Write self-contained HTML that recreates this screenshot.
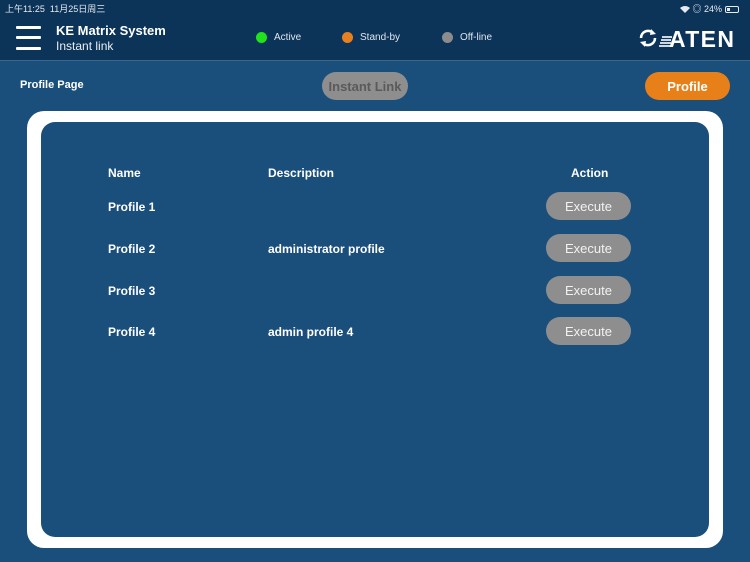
<!DOCTYPE html>
<html><head><meta charset="utf-8">
<style>
*{margin:0;padding:0;box-sizing:border-box}
body{width:750px;height:562px;overflow:hidden;background:#1b4f7b;font-family:"Liberation Sans","Noto Sans CJK SC",sans-serif;position:relative;color:#fff}
.hdr{position:absolute;left:0;top:0;width:750px;height:61px;background:#0c3358;border-bottom:1px solid #3a6690}
.abs{position:absolute;white-space:nowrap}
.bar{position:absolute;left:16px;width:25px;height:3px;background:#fff;border-radius:1px}
.dot{position:absolute;width:11px;height:11px;border-radius:50%}
.lg{font-size:10px;color:#dfe6ee}
.btn{position:absolute;border-radius:15px;text-align:center;font-weight:bold;font-size:13px}
.frame{position:absolute;left:27px;top:111px;width:696px;height:437px;background:#fff;border-radius:17px}
.inner{position:absolute;left:41px;top:122px;width:668px;height:415px;background:#1b4f7b;border-radius:14px}
.t{position:absolute;font-weight:bold;font-size:12px;color:#fff}
.ex{position:absolute;left:546px;width:85px;height:28px;border-radius:14px;background:#8e8e8e;color:#f2f2f2;font-size:13px;text-align:center;line-height:30px}
</style></head><body>
<div class="hdr"></div>
<div class="abs" style="left:5px;top:2px;font-size:9px;color:#e6ebf1">上午11:25&nbsp;&nbsp;11月25日周三</div>
<div class="abs" style="left:680px;top:2px;font-size:9px;color:#e6ebf1">
<svg width="10" height="8" viewBox="0 0 10 8" style="vertical-align:-1px"><path d="M0 3 Q5 -1 10 3 L5 8Z" fill="#e6ebf1"/></svg> ◎ 24% <span style="display:inline-block;width:14px;height:7px;border:1px solid #e6ebf1;border-radius:2px;vertical-align:-1px;position:relative"><span style="position:absolute;left:1px;top:1px;width:3px;height:3px;background:#e6ebf1"></span></span></div>
<div class="bar" style="top:26px"></div><div class="bar" style="top:36px"></div><div class="bar" style="top:47px"></div>
<div class="abs" style="left:56px;top:23px;font-size:13px;font-weight:bold">KE Matrix System</div>
<div class="abs" style="left:56px;top:39px;font-size:12px;color:#e8eef4">Instant link</div>
<div class="dot" style="left:256px;top:32px;background:#21e21b"></div><div class="abs lg" style="left:274px;top:32px">Active</div>
<div class="dot" style="left:342px;top:32px;background:#e88020"></div><div class="abs lg" style="left:360px;top:32px">Stand-by</div>
<div class="dot" style="left:442px;top:32px;background:#8c8c8c"></div><div class="abs lg" style="left:460px;top:32px">Off-line</div>
<svg class="abs" style="left:636px;top:26px" width="100" height="24" viewBox="0 0 100 24">
<path d="M5 12 A7 7 0 0 1 17 7" stroke="#fff" stroke-width="2.6" fill="none"/><path d="M15 3 L20 8 L14 9Z" fill="#fff"/>
<path d="M19 12 A7 7 0 0 1 7 17" stroke="#fff" stroke-width="2.6" fill="none"/><path d="M9 21 L4 16 L10 15Z" fill="#fff"/>
<path d="M26 11h10M25 14h10M24 17h11M23 20h12" stroke="#cfd8e2" stroke-width="2"/>
<text x="33" y="21" font-family="Liberation Sans" font-weight="bold" font-size="23" fill="#fff" textLength="65">ATEN</text>
</svg>
<div class="abs" style="left:20px;top:79px;font-size:11px;font-weight:bold">Profile Page</div>
<div class="btn" style="left:322px;top:72px;width:86px;height:28px;line-height:29px;background:#8e8e8e;color:#5a5a5a">Instant Link</div>
<div class="btn" style="left:645px;top:72px;width:85px;height:28px;line-height:29px;background:#e8801a;color:#fff">Profile</div>
<div class="frame"></div><div class="inner"></div>
<div class="t" style="left:108px;top:166px">Name</div>
<div class="t" style="left:268px;top:166px">Description</div>
<div class="t" style="left:571px;top:166px">Action</div>
<div class="t" style="left:108px;top:200px">Profile 1</div>
<div class="t" style="left:108px;top:242px">Profile 2</div><div class="t" style="left:268px;top:242px">administrator profile</div>
<div class="t" style="left:108px;top:284px">Profile 3</div>
<div class="t" style="left:108px;top:325px">Profile 4</div><div class="t" style="left:268px;top:325px">admin profile 4</div>
<div class="ex" style="top:192px">Execute</div>
<div class="ex" style="top:234px">Execute</div>
<div class="ex" style="top:276px">Execute</div>
<div class="ex" style="top:317px">Execute</div>
</body></html>
